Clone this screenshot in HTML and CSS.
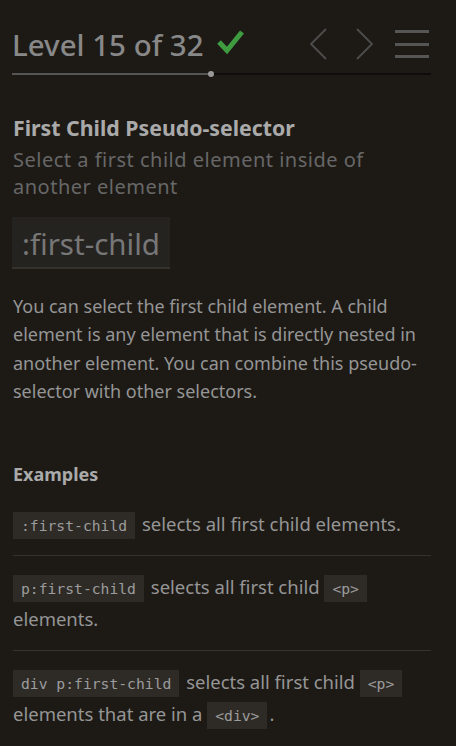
FILE: index.html
```html
<!DOCTYPE html>
<html>
<head>
<meta charset="utf-8">
<link rel="stylesheet" href="styles.css">
</head>
<body>
<div class="sidebar">
  <header class="level-nav">
    <h2 class="level-title">Level 15 of 32
      <svg class="check" width="28" height="26" viewBox="0 0 28 26"><path d="M3 13 L11 21.5 L26 3" fill="none" stroke="#3f9b3f" stroke-width="5"/></svg>
    </h2>
    <div class="nav-buttons">
      <svg class="nav-btn prev" width="18" height="32" viewBox="0 0 18 32"><path d="M17 1 L2 16 L17 31" fill="none" stroke="#4d4d4d" stroke-width="1.8"/></svg>
      <svg class="nav-btn next" width="18" height="32" viewBox="0 0 18 32"><path d="M1 1 L16 16 L1 31" fill="none" stroke="#4d4d4d" stroke-width="1.8"/></svg>
      <div class="menu"><span></span><span></span><span></span></div>
    </div>
  </header>
  <div class="progress"><div class="progress-fill" style="width:47.5%"><span class="dot"></span></div></div>

  <div class="level-info">
    <h3 class="selector-name">First Child Pseudo-selector</h3>
    <h4 class="title">Select a first child element inside of another element</h4>
    <div class="syntax">:first-child</div>
    <p class="hint">You can select the first child element. A child element is any element that is directly nested in another element. You can combine this pseudo-selector with other selectors.</p>
    <h4 class="examples-title">Examples</h4>
    <div class="example"><code>:first-child</code> selects all first child elements.</div>
    <div class="example"><code>p:first-child</code> selects all first child <code>&lt;p&gt;</code> elements.</div>
    <div class="example"><code>div p:first-child</code> selects all first child <code>&lt;p&gt;</code> elements that are in a <code>&lt;div&gt;</code>.</div>
  </div>
</div>
</body>
</html>
```
FILE: styles.css
```css
html, body {
  margin: 0;
  padding: 0;
  background: #1d1a16;
}
body {
  font-family: "Noto Sans", sans-serif;
  color: #999;
}
.sidebar {
  padding: 20px 25px 0 12px;
}
.level-nav {
  display: flex;
  align-items: center;
  justify-content: space-between;
  height: 48px;
}
.level-title {
  margin: 0;
  font-size: 29.5px;
  font-weight: 500;
  color: #888;
  display: flex;
  align-items: center;
  gap: 12px;
}
.check { margin-top: -4px; }
.nav-buttons {
  display: flex;
  align-items: center;
  margin-right: 2px;
}
.nav-btn.next { margin-left: 29px; margin-right: 21px; }
.menu {
  width: 34px;
  display: flex;
  flex-direction: column;
  gap: 9.5px;
}
.menu span {
  display: block;
  height: 3px;
  background: #555;
}
.progress {
  margin-top: 5px;
  height: 2px;
  background: #0e0d0b;
  position: relative;
}
.progress-fill {
  height: 2px;
  background: #555;
  position: relative;
}
.dot {
  position: absolute;
  right: -3px;
  top: -2px;
  width: 6px;
  height: 6px;
  border-radius: 50%;
  background: #999;
}
.level-info {
  padding: 38px 0 0 1px;
}
.selector-name {
  margin: 0;
  font-size: 21.3px;
  font-weight: 700;
  color: #aaa;
}
.title {
  margin: 4px 0 0;
  font-size: 20px;
  letter-spacing: 0.5px;
  font-weight: 400;
  color: #676767;
  line-height: 27px;
}
.syntax {
  display: inline-block;
  margin-top: 17px;
  margin-left: -1px;
  padding: 6px 10px 3px;
  font-size: 29.5px;
  color: #777;
  background: #252320;
  border-bottom: 2px solid #35322e;
}
.hint {
  margin: 23px 0 0;
  font-size: 18px;
  line-height: 28.3px;
  color: #959595;
}
.examples-title {
  margin: 57px 0 0;
  font-size: 18px;
  font-weight: 700;
  color: #aaa;
}
.example {
  font-size: 18.5px;
  line-height: 32px;
  color: #959595;
  padding: 15px 0;
  border-bottom: 1px solid #35322e;
}
.example:last-child { border-bottom: none; }
.examples-title + .example { margin-top: 7px; }
code {
  font-family: "DejaVu Sans Mono", monospace;
  font-size: 14.7px;
  line-height: 1;
  background: #2e2b27;
  color: #9c9c9c;
  padding: 5px 8px;
  margin-right: 2px;
}
```
